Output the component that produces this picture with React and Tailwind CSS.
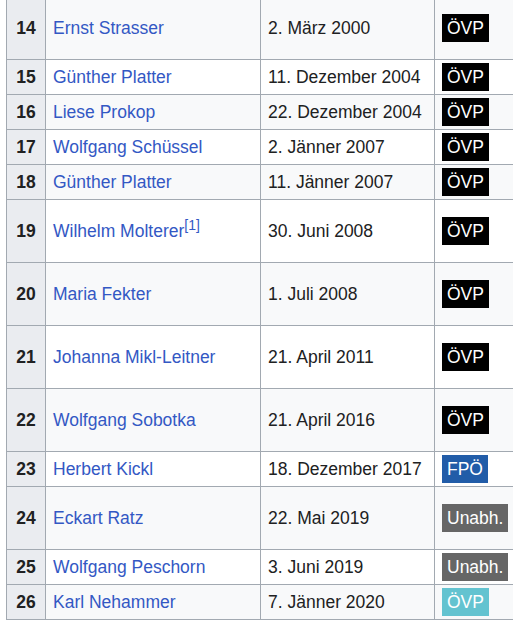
import React from "react";

const rows = [
  { n: 14, name: "Ernst Strasser", date: "2. März 2000", party: "ÖVP", tall: true },
  { n: 15, name: "Günther Platter", date: "11. Dezember 2004", party: "ÖVP" },
  { n: 16, name: "Liese Prokop", date: "22. Dezember 2004", party: "ÖVP" },
  { n: 17, name: "Wolfgang Schüssel", date: "2. Jänner 2007", party: "ÖVP" },
  { n: 18, name: "Günther Platter", date: "11. Jänner 2007", party: "ÖVP" },
  { n: 19, name: "Wilhelm Molterer", sup: "[1]", date: "30. Juni 2008", party: "ÖVP", tall: true },
  { n: 20, name: "Maria Fekter", date: "1. Juli 2008", party: "ÖVP", tall: true },
  { n: 21, name: "Johanna Mikl-Leitner", date: "21. April 2011", party: "ÖVP", tall: true },
  { n: 22, name: "Wolfgang Sobotka", date: "21. April 2016", party: "ÖVP", tall: true },
  { n: 23, name: "Herbert Kickl", date: "18. Dezember 2017", party: "FPÖ" },
  { n: 24, name: "Eckart Ratz", date: "22. Mai 2019", party: "Unabh.", tall: true },
  { n: 25, name: "Wolfgang Peschorn", date: "3. Juni 2019", party: "Unabh." },
  { n: 26, name: "Karl Nehammer", date: "7. Jänner 2020", party: "ÖVP2" },
];

function Badge({ party }) {
  if (party === "FPÖ")
    return <span className="inline-block bg-[#215ca8] px-[5px] text-white">FPÖ</span>;
  if (party === "Unabh.")
    return <span className="inline-block bg-[#666666] px-[5px] text-white">Unabh.</span>;
  if (party === "ÖVP2")
    return <span className="inline-block bg-[#63c3d0] px-[5px] text-white">ÖVP</span>;
  return <span className="inline-block bg-black px-[5px] text-white">ÖVP</span>;
}

export default function App() {
  return (
    <div className="h-[622px] w-[513px] overflow-hidden bg-white font-['Liberation_Sans',Arial,sans-serif] text-[17.5px] leading-[28px] text-[#202122]">
      <div className="-mt-[4px] ml-[6px] grid w-max grid-cols-[38px_214px_173px_100px] gap-px bg-[#a2a9b1] p-px">
        {rows.map((r, i) => {
          const h = r.tall ? "h-[62px]" : "h-[34px]";
          const bg = i % 2 === 0 ? "bg-[#f8f9fa]" : "bg-white";
          return (
            <React.Fragment key={r.n}>
              <div className={`${h} flex items-center justify-center bg-[#eaecf0] font-bold`}>{r.n}</div>
              <div className={`${h} ${bg} flex items-center px-[7px] text-[#3358c4]`}>
                <span>
                  {r.name}
                  {r.sup && <sup className="text-[14px]">{r.sup}</sup>}
                </span>
              </div>
              <div className={`${h} ${bg} flex items-center px-[7px]`}>{r.date}</div>
              <div className={`${h} ${bg} flex items-center px-[7px]`}>
                <Badge party={r.party} />
              </div>
            </React.Fragment>
          );
        })}
      </div>
    </div>
  );
}
